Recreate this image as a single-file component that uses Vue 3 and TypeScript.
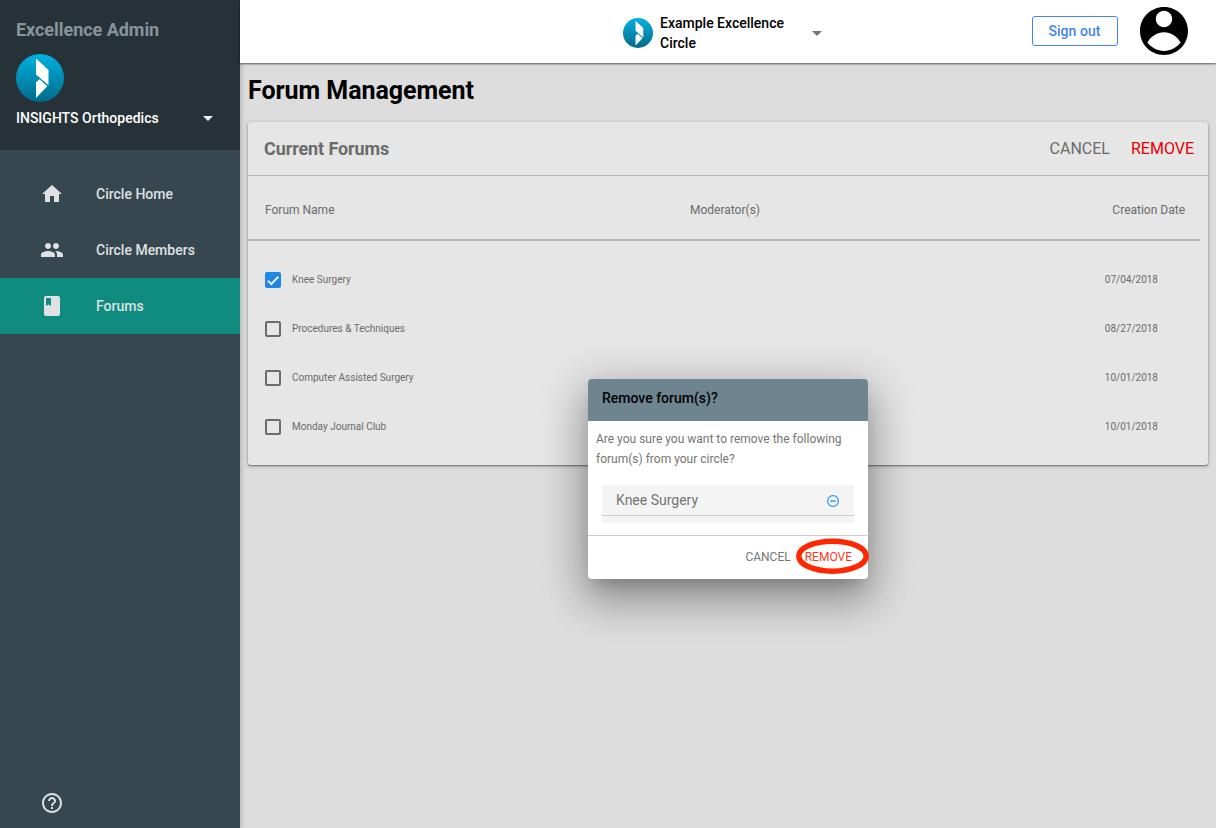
<script setup lang="ts">
import { ref } from 'vue'

interface Forum {
  name: string
  created: string
  checked: boolean
}

interface NavItem {
  label: string
  path: string
  active?: boolean
}

const nav: NavItem[] = [
  { label: 'Circle Home', path: 'M10 20v-6h4v6h5v-8h3L12 3 2 12h3v8z' },
  {
    label: 'Circle Members',
    path: 'M16 11c1.66 0 2.99-1.34 2.99-3S17.66 5 16 5c-1.66 0-3 1.34-3 3s1.34 3 3 3zm-8 0c1.66 0 2.99-1.34 2.99-3S9.66 5 8 5C6.34 5 5 6.34 5 8s1.34 3 3 3zm0 2c-2.33 0-7 1.17-7 3.500V19h14v-2.500c0-2.330-4.670-3.500-7-3.500zm8 0c-.29 0-.62.02-.97.05 1.160.84 1.970 1.970 1.970 3.450V19h6v-2.500c0-2.330-4.670-3.500-7-3.500z',
  },
  {
    label: 'Forums',
    path: 'M18 2H6c-1.100 0-2 .9-2 2v16c0 1.100.9 2 2 2h12c1.100 0 2-.9 2-2V4c0-1.100-.9-2-2-2zM6 4h5v8l-2.500-1.500L6 12V4z',
    active: true,
  },
]

const forums = ref<Forum[]>([
  { name: 'Knee Surgery', created: '07/04/2018', checked: true },
  { name: 'Procedures & Techniques', created: '08/27/2018', checked: false },
  { name: 'Computer Assisted Surgery', created: '10/01/2018', checked: false },
  { name: 'Monday Journal Club', created: '10/01/2018', checked: false },
])
</script>

<template>
  <div class="app">
    <aside class="sidebar">
      <div class="brand">
        <div class="brand-title"><span>Excellence Admin</span></div>
        <svg class="brand-logo" viewBox="0 0 48 48">
          <defs>
            <linearGradient id="logo-fill" x1="0" y1="0" x2="0" y2="1">
              <stop offset="0" stop-color="#00b1e2" />
              <stop offset="1" stop-color="#006a89" />
            </linearGradient>
          </defs>
          <circle cx="24" cy="24" r="24" fill="url(#logo-fill)" />
          <path d="M20 4.500 32.500 16v15.300L20 20.500zM23.500 25.200 31.300 32.300 20 44V28.200z" fill="#fff" />
        </svg>
        <div class="org">
          <span class="org-name">INSIGHTS Orthopedics</span>
          <svg class="caret" viewBox="0 0 10 5"><path d="M0 0h10L5 5z" fill="#f0f1f1" /></svg>
        </div>
      </div>
      <nav class="nav">
        <a v-for="item in nav" :key="item.label" class="nav-item" :class="{ active: item.active }">
          <svg class="nav-icon" viewBox="0 0 24 24"><path :d="item.path" fill="currentColor" /></svg>
          <span>{{ item.label }}</span>
        </a>
      </nav>
      <svg class="help" viewBox="0 0 24 24">
        <path fill="currentColor" d="M11 18h2v-2h-2v2zm1-16C6.480 2 2 6.480 2 12s4.480 10 10 10 10-4.480 10-10S17.520 2 12 2zm0 18c-4.410 0-8-3.590-8-8s3.590-8 8-8 8 3.590 8 8-3.590 8-8 8zm0-14c-2.210 0-4 1.790-4 4h2c0-1.100.9-2 2-2s2 .9 2 2c0 2-3 1.750-3 5h2c0-2.250 3-2.500 3-5 0-2.210-1.790-4-4-4z" />
      </svg>
    </aside>

    <div class="content">
      <header class="topbar">
        <div class="circle-picker">
          <svg class="picker-logo" viewBox="0 0 48 48">
            <circle cx="24" cy="24" r="24" fill="url(#logo-fill)" />
            <path d="M20 4.500 32.500 16v15.300L20 20.500zM23.500 25.200 31.300 32.300 20 44V28.200z" fill="#fff" />
          </svg>
          <span class="picker-name">Example Excellence<br />Circle</span>
          <svg class="caret" viewBox="0 0 10 5"><path d="M0 0h10L5 5z" fill="#757575" /></svg>
        </div>
        <button class="sign-out">Sign out</button>
        <svg class="avatar" viewBox="2 2 20 20">
          <path d="M12 2C6.480 2 2 6.480 2 12s4.480 10 10 10 10-4.480 10-10S17.520 2 12 2zm0 1.600c1.900 0 3.400 1.540 3.400 3.400s-1.500 3.400-3.400 3.400-3.400-1.540-3.400-3.400 1.500-3.400 3.400-3.400zm0 16.700c-2.600 0-5.200-1.300-6.900-3.500 1.200-2.500 4-4.300 6.900-4.300s5.700 1.800 6.900 4.300c-1.700 2.200-4.300 3.500-6.900 3.500z" />
        </svg>
      </header>

      <main class="page">
        <h1><span>Forum Management</span></h1>
        <section class="card">
          <div class="card-head">
            <h2>Current Forums</h2>
            <span class="card-cancel">CANCEL</span>
            <span class="card-remove">REMOVE</span>
          </div>
          <div class="columns">
            <span class="col-name">Forum Name</span>
            <span class="col-mod">Moderator(s)</span>
            <span class="col-date">Creation Date</span>
          </div>
          <div class="rows">
            <div v-for="forum in forums" :key="forum.name" class="row">
              <span class="box" :class="{ checked: forum.checked }" @click="forum.checked = !forum.checked">
                <svg v-if="forum.checked" viewBox="0 0 16 16">
                  <path d="M2.800 8.600 6.300 12 13.300 4.700" fill="none" stroke="#e9eef3" stroke-width="2" />
                </svg>
              </span>
              <span class="row-name">{{ forum.name }}</span>
              <span class="row-date">{{ forum.created }}</span>
            </div>
          </div>
        </section>
      </main>
    </div>

    <div class="dialog">
      <div class="dialog-title">Remove forum(s)?</div>
      <p class="dialog-text">Are you sure you want to remove the following<br />forum(s) from your circle?</p>
      <div class="selection">
        <div class="selected">
          <span>Knee Surgery</span>
          <svg viewBox="0 0 12 12">
            <circle cx="6" cy="6" r="5.400" fill="none" stroke="#2b98f0" stroke-width="1.200" />
            <path d="M3 6h6" stroke="#2b98f0" stroke-width="1.300" />
          </svg>
        </div>
      </div>
      <div class="dialog-actions">
        <span class="dialog-cancel">CANCEL</span>
        <span class="dialog-remove">REMOVE</span>
      </div>
      <svg class="highlight" viewBox="0 0 74 36">
        <ellipse cx="36.500" cy="18.200" rx="33.700" ry="15" fill="none" stroke="#ff2600" stroke-width="5.500" />
      </svg>
    </div>
  </div>
</template>

<style>
body {
  margin: 0;
  overflow: hidden;
}
</style>

<style scoped>
.app {
  position: relative;
  display: flex;
  width: 1216px;
  height: 828px;
  overflow: hidden;
  background: #ddd;
  font-family: Roboto, 'Liberation Sans', sans-serif;
}
.app * {
  box-sizing: border-box;
}
span {
  white-space: nowrap;
}
svg {
  display: block;
  flex: none;
}
.sidebar {
  display: flex;
  flex-direction: column;
  flex: none;
  width: 240px;
  background: #37474f;
  color: #dfe1e2;
  box-shadow: 0 0 6px rgba(0, 0, 0, 0.3);
  z-index: 1;
}
.brand {
  height: 150px;
  padding: 18px 27px 0 16px;
  background: #263238;
}
.brand-title {
  height: 24px;
  line-height: 24px;
  font-size: 18px;
  font-weight: 700;
  letter-spacing: -0.04px;
  color: #88949a;
}
.brand-logo {
  width: 48px;
  height: 48px;
  margin-top: 12px;
}
.org {
  display: flex;
  align-items: center;
  justify-content: space-between;
  height: 32px;
  color: #fff;
  font-size: 14px;
  font-weight: 500;
}
.caret {
  width: 10px;
  height: 5px;
}
.nav {
  display: flex;
  flex-direction: column;
  flex: 1;
  padding-top: 16px;
}
.nav-item {
  display: flex;
  align-items: center;
  gap: 32px;
  height: 56px;
  padding-left: 40px;
  font-size: 14px;
  font-weight: 500;
}
.nav-item.active {
  background: #0f8b7f;
}
.nav-icon {
  width: 24px;
  height: 24px;
}
.help {
  width: 24px;
  height: 24px;
  margin: 0 0 13px 40px;
}
.content {
  flex: 1;
  min-width: 0;
}
.topbar {
  position: relative;
  z-index: 2;
  display: flex;
  height: 63px;
  padding-right: 28px;
  background: #fff;
  box-shadow: 0 1px 2px rgba(0, 0, 0, 0.6);
}
.circle-picker {
  display: flex;
  align-items: center;
  width: 792px;
  height: 66px;
  padding-left: 383px;
}
.picker-logo {
  width: 30px;
  height: 30px;
}
.picker-name {
  width: 152px;
  margin-left: 7px;
  font-size: 14px;
  font-weight: 500;
  line-height: 20px;
}
.sign-out {
  width: 86px;
  height: 30px;
  margin: 16px 22px 0 0;
  padding: 0 1px 0 0;
  border: 1px solid #4285f4;
  border-radius: 3px;
  background: #fff;
  color: #4285f4;
  font: 500 14px Roboto, sans-serif;
  letter-spacing: 0.05px;
}
.avatar {
  width: 48px;
  height: 48px;
  margin-top: 7px;
}
.page {
  padding: 11px 8px 0;
}
h1,
h2,
p {
  margin: 0;
}
h1 {
  height: 48px;
  line-height: 34px;
  font-size: 25px;
  font-weight: 700;
  letter-spacing: -0.05px;
}
.card {
  height: 343px;
  border-radius: 3px;
  background: #e6e6e6;
  color: #6b6b6b;
  box-shadow: 0 1px 2px rgba(0, 0, 0, 0.5), 0 1px 6px rgba(0, 0, 0, 0.12);
}
.card-head {
  display: flex;
  align-items: center;
  height: 54px;
  padding: 0 14px 0 16px;
  border-bottom: 1px solid #b8b8b8;
}
h2 {
  flex: 1;
  font-size: 18px;
  font-weight: 700;
  letter-spacing: -0.1px;
}
.card-cancel {
  margin-right: 21px;
  font-size: 16px;
}
.card-remove {
  font-size: 16px;
  color: #e60000;
}
.columns {
  display: flex;
  height: 65px;
  margin-right: 8px;
  padding: 0 15px 0 17px;
  border-bottom: 2px solid #b8b8b8;
  line-height: 68px;
  font-size: 12px;
}
.col-name {
  width: 425px;
}
.col-mod {
  flex: 1;
}
.rows {
  padding-top: 14px;
}
.row {
  display: flex;
  align-items: center;
  height: 49px;
  padding: 0 50px 0 17px;
  font-size: 10px;
}
.box {
  width: 16px;
  height: 16px;
  border: 2px solid #6b6b6b;
  border-radius: 2px;
}
.box.checked {
  border: 0;
  background: #1e88e5;
}
.row-name {
  flex: 1;
  margin-left: 11px;
}
.dialog {
  position: absolute;
  z-index: 3;
  left: 588px;
  top: 379px;
  width: 280px;
  height: 200px;
  border-radius: 4px;
  background: #fff;
  color: #757575;
  box-shadow: 0 11px 15px -7px rgba(0, 0, 0, 0.2), 0 24px 38px 3px rgba(0, 0, 0, 0.18), 0 9px 46px 8px rgba(0, 0, 0, 0.2);
}
.dialog-title {
  height: 42px;
  padding-left: 14px;
  border-radius: 4px 4px 0 0;
  background: #6e8590;
  color: #000;
  font-size: 14px;
  font-weight: 500;
  line-height: 38px;
}
.dialog-text {
  height: 64px;
  padding: 8px 0 0 8px;
  font-size: 12px;
  line-height: 20px;
  white-space: nowrap;
}
.selection {
  height: 38px;
  margin: 0 14px 12px;
  background: #f4f4f4;
}
.selected {
  display: flex;
  align-items: center;
  justify-content: space-between;
  height: 31px;
  padding: 0 15px 0 14px;
  border-bottom: 1px solid #ccc;
  font-size: 14px;
}
.selected svg {
  width: 12px;
  height: 12px;
  margin-top: 2px;
}
.dialog-actions {
  display: flex;
  justify-content: flex-end;
  width: 281px;
  padding-right: 17px;
  border-top: 1px solid #ccc;
  font-size: 12px;
  line-height: 42px;
}
.dialog-cancel {
  margin-right: 14px;
}
.dialog-remove {
  color: #fb3a20;
}
.highlight {
  position: absolute;
  left: 208px;
  top: 159px;
  width: 74px;
  height: 36px;
}
</style>
